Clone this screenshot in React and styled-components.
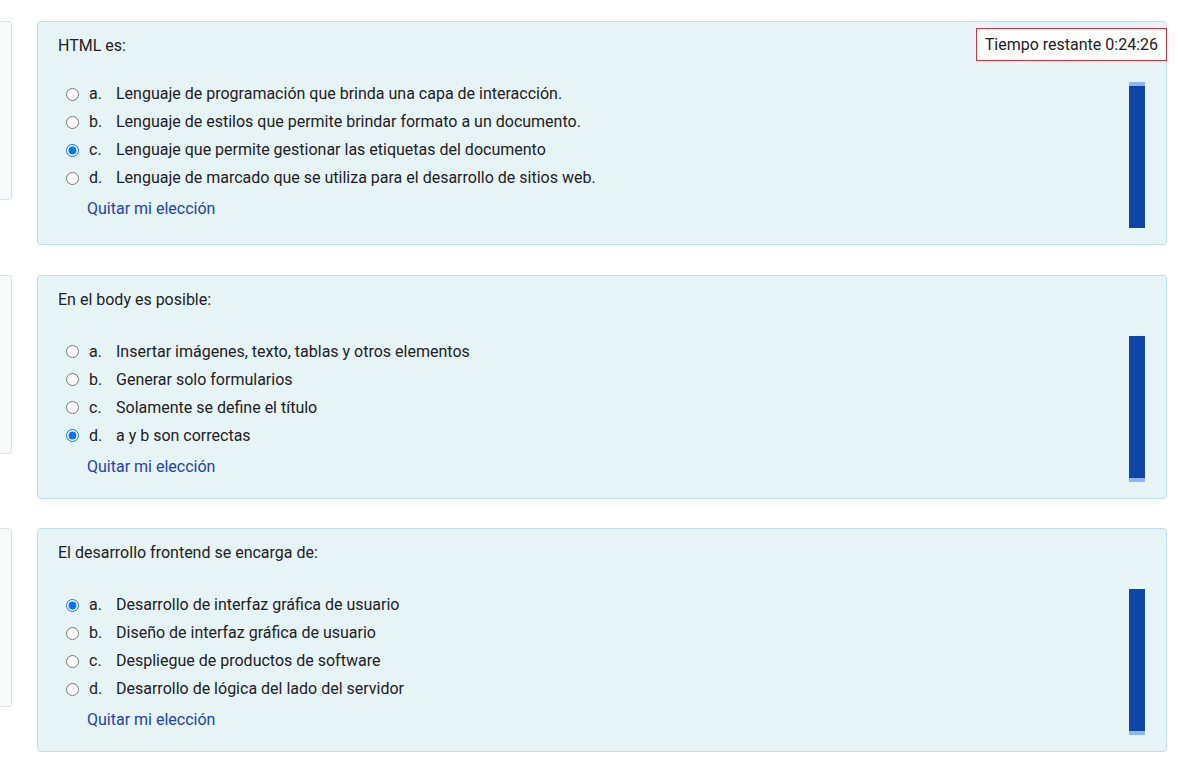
import React from "react";
import styled, { createGlobalStyle } from "styled-components";

const Global = createGlobalStyle`
  html, body { margin: 0; padding: 0; background: #ffffff; }
  body { font-family: Roboto, "Noto Sans", "Liberation Sans", sans-serif; color: #1d2125; overflow: hidden; }
  * { box-sizing: border-box; }
`;

const Page = styled.div`
  width: 1178px;
  padding: 21px 11px 0 0;
  display: flex;
  flex-direction: column;
  gap: 29.5px;
`;

const QuestionRow = styled.div`
  display: flex;
  align-items: flex-start;
  gap: 25px;
`;

const InfoBox = styled.div`
  width: 100px;
  margin-left: -88px;
  height: 179px;
  background: #f8f9fa;
  border: 1px solid #dee2e6;
  border-radius: 3px;
  flex-shrink: 0;
`;

const Card = styled.div`
  position: relative;
  flex: 1;
  height: 224px;
  background: #e7f4f6;
  border: 1px solid #bde0e8;
  border-radius: 4px;
  padding: 13px 20px 0 20px;
`;

const QText = styled.div`
  font-size: 16px;
  line-height: 22px;
`;

const Lower = styled.div`
  margin-top: 25px;
  display: flex;
  align-items: flex-start;
`;

const Answers = styled.div`
  flex: 1;
  display: flex;
  flex-direction: column;
  gap: 6px;
  padding-top: ${p => (p.$tight ? "1px" : "5px")};
`;

const Option = styled.label`
  display: flex;
  align-items: center;
  height: 22px;
  font-size: 16px;
  line-height: 22px;
`;

const Radio = styled.input.attrs({ type: "radio" })`
  width: 13px;
  height: 13px;
  margin: 0 10px 0 8px;
  accent-color: #0075ff;
`;

const Letter = styled.span`
  width: 27px;
`;

const Clear = styled.a`
  display: block;
  margin: 3px 0 0 29px;
  font-size: 16px;
  line-height: 22px;
  color: #2341b0;
  text-decoration: none;
`;

const Bar = styled.div`
  width: 16px;
  height: 146px;
  margin-left: auto;
  margin-right: 1px;
  background: #0e45a9;
  border-${p => (p.$lightTop ? "top" : "bottom")}: 4px solid #93b5f3;
`;

const Timer = styled.div`
  position: absolute;
  top: 6px;
  right: -1px;
  height: 33px;
  padding: 0 8px;
  background: #ffffff;
  border: 1px solid #d93040;
  font-size: 16px;
  line-height: 31px;
  color: #1d2125;
`;

const questions = [
  {
    text: "HTML es:",
    options: [
      "Lenguaje de programación que brinda una capa de interacción.",
      "Lenguaje de estilos que permite brindar formato a un documento.",
      "Lenguaje que permite gestionar las etiquetas del documento",
      "Lenguaje de marcado que se utiliza para el desarrollo de sitios web.",
    ],
    checked: 2,
  },
  {
    text: "En el body es posible:",
    options: [
      "Insertar imágenes, texto, tablas y otros elementos",
      "Generar solo formularios",
      "Solamente se define el título",
      "a y b son correctas",
    ],
    checked: 3,
  },
  {
    text: "El desarrollo frontend se encarga de:",
    options: [
      "Desarrollo de interfaz gráfica de usuario",
      "Diseño de interfaz gráfica de usuario",
      "Despliegue de productos de software",
      "Desarrollo de lógica del lado del servidor",
    ],
    checked: 0,
  },
];

const letters = ["a.", "b.", "c.", "d."];

export default function App() {
  return (
    <>
      <Global />
      <Page>
        {questions.map((q, qi) => (
          <QuestionRow key={qi}>
            <InfoBox />
            <Card>
              {qi === 0 && <Timer>Tiempo restante 0:24:26</Timer>}
              <QText>{q.text}</QText>
              <Lower>
                <Answers $tight={qi === 0}>
                  {q.options.map((o, oi) => (
                    <Option key={oi}>
                      <Radio name={`q${qi}`} defaultChecked={oi === q.checked} />
                      <Letter>{letters[oi]}</Letter>
                      <span>{o}</span>
                    </Option>
                  ))}
                  <Clear href="#">Quitar mi elección</Clear>
                </Answers>
                <Bar $lightTop={qi === 0} />
              </Lower>
            </Card>
          </QuestionRow>
        ))}
      </Page>
    </>
  );
}
